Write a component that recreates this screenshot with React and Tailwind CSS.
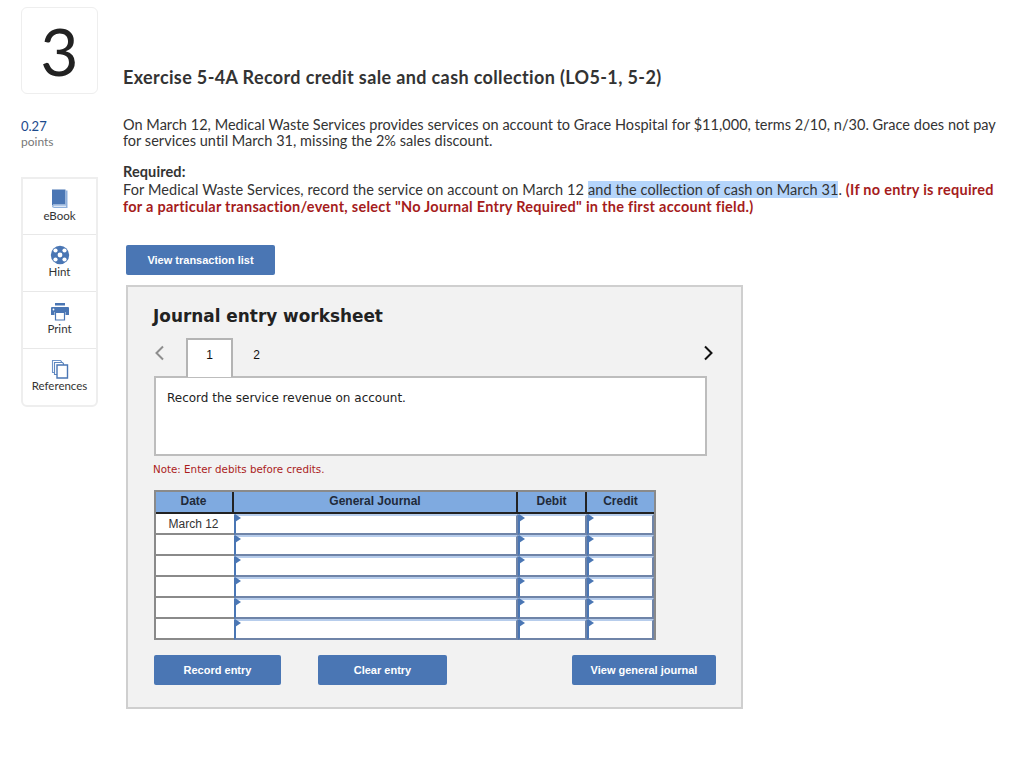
const ROWS = ['March 12', '', '', '', '', ''];

function BookIcon() {
    return (
        <svg width="20" height="20" viewBox="0 0 20 20">
            <path d="M2 0.5h13.5v15H4.500C3 15.500 2 16 2 17z" fill="#4a76b4" />
            <path d="M2 17c0-1 1-1.500 2.500-1.500h11V1.500h2V19H4.500C3 19 2 18.300 2 17z" fill="#8fb0dc" />
            <path d="M3.500 17.200h12.500" stroke="#fff" strokeWidth="1" />
        </svg>
    );
}

function HintIcon() {
    return (
        <svg width="20" height="20" viewBox="0 0 20 20">
            <circle cx="10" cy="10" r="9.200" fill="#4a76b4" />
            <circle cx="10" cy="10" r="2.400" fill="#fff" />
            <circle cx="5.500" cy="5.500" r="2.100" fill="#fff" />
            <circle cx="14.500" cy="5.500" r="2.100" fill="#fff" />
            <circle cx="5.500" cy="14.500" r="2.100" fill="#fff" />
            <circle cx="14.500" cy="14.500" r="2.100" fill="#fff" />
        </svg>
    );
}

function PrintIcon() {
    return (
        <svg width="20" height="20" viewBox="0 0 20 20">
            <path d="M5 1h10v2.500H5z" fill="#4a76b4" />
            <path d="M2 5h16a1 1 0 0 1 1 1v7h-3.500v-3h-11v3H1V6a1 1 0 0 1 1-1z" fill="#4a76b4" />
            <circle cx="3.500" cy="7.500" r="0.900" fill="#fff" />
            <path d="M5.500 10.500h9v7.500h-9z" fill="#fff" stroke="#4a76b4" strokeWidth="1.200" />
        </svg>
    );
}

function RefIcon() {
    return (
        <svg width="20" height="20" viewBox="0 0 20 20">
            <path d="M2.500 1.500h8l1 1v11h-9z" fill="#fff" stroke="#6f94c8" strokeWidth="1.100" />
            <path d="M4.500 3.500h8l1 1v11h-9z" fill="#fff" stroke="#5f88c0" strokeWidth="1.100" />
            <path d="M7 6h10.500v13H7z" fill="#fff" stroke="#4a76b4" strokeWidth="1.400" />
        </svg>
    );
}

function Tool({ icon, label, className }) {
    return (
        <div className={`flex flex-col items-center pt-[10px] ${className}`}>
            {icon}
            <span className="text-[11.500px] leading-[13px] text-[#333]">{label}</span>
        </div>
    );
}

function Sidebar() {
    return (
        <div className="w-[77px] shrink-0">
            <div className="h-[87px] border border-[#eeeeee] rounded-md flex items-start justify-center">
                <span className="mt-[10px] text-[66px] leading-[66px] text-[#222]">3</span>
            </div>
            <div className="mt-[24px] text-[13px] leading-4 text-[#1c4a8c]">0.27</div>
            <div className="text-[12px] leading-4 text-[#777]">points</div>
            <div className="mt-[27px] border-2 border-[#eeeeee] rounded-b-md">
                <Tool icon={<BookIcon />} label="eBook" className="h-[56px] border-b border-[#e8e8e8]" />
                <Tool icon={<HintIcon />} label="Hint" className="h-[57px] border-b border-[#e8e8e8]" />
                <Tool icon={<PrintIcon />} label="Print" className="h-[57px] border-b border-[#e8e8e8]" />
                <Tool icon={<RefIcon />} label="References" className="h-[56px]" />
            </div>
        </div>
    );
}

function Btn({ children, className }) {
    return (
        <button className={`h-[30px] bg-[#4a76b4] rounded-[2px] text-white text-[11px] font-bold font-['Liberation_Sans',sans-serif] ${className}`}>
            {children}
        </button>
    );
}

function EntryCell({ className }) {
    return (
        <div className={`relative bg-white border-l-2 border-r-2 border-l-[#4a76b4] border-r-[#6f84a8] border-t-2 border-t-[#b7cdec] border-b-2 border-b-[#6f84a8] ${className}`}>
            <span className="absolute -left-[1px] -top-[2px] w-0 h-0 border-y-[4px] border-y-transparent border-l-[6px] border-l-[#4a76b4]" />
        </div>
    );
}

function JournalTable() {
    return (
        <div className="w-[502px] mt-[14px] border-2 border-b-0 border-[#8a8a8a] font-['Liberation_Sans',sans-serif] text-[12px]">
            <div className="flex h-[22px] bg-[#7faae0] border-b-2 border-[#222] font-bold text-[#1f2a3a] leading-[19px] text-center">
                <div className="w-[78px] pr-[1px] border-r-2 border-[#222]">Date</div>
                <div className="w-[284px] border-r-2 border-[#222]">General Journal</div>
                <div className="w-[69px] border-r-2 border-[#222]">Debit</div>
                <div className="flex-1">Credit</div>
            </div>
            {ROWS.map((date, i) => (
                <div key={i} className="flex h-[21px]">
                    <div className="w-[78px] pr-[3px] text-center text-[#333] leading-[20px] bg-white border-b-2 border-[#8a8a8a]">
                        {date}
                    </div>
                    <EntryCell className="w-[284px]" />
                    <EntryCell className="w-[69px]" />
                    <EntryCell className="flex-1" />
                </div>
            ))}
        </div>
    );
}

function Worksheet() {
    return (
        <div className="w-[617px] h-[424px] mt-[10px] ml-[3px] bg-[#f2f2f2] border-2 border-[#cfcfcf] pl-[26px] pt-[17px] font-['DejaVu_Sans',sans-serif]">
            <h2 className="text-[16.900px] leading-[24px] font-bold text-[#222] -ml-[1px]">Journal entry worksheet</h2>
            <div className="flex items-center h-[39px] mt-[10px] relative z-10">
                <span className="w-[32px] -mt-[10px]">
                    <svg width="12" height="16" viewBox="0 0 12 16" fill="none" stroke="#8e8e8e" strokeWidth="2">
                        <path d="M9 1.500L2.500 8 9 14.500" />
                    </svg>
                </span>
                <div className="w-[47px] h-[39px] bg-white border-2 border-b-0 border-[#b4b4b4] text-center text-[12px] leading-[31px] text-[#111] font-['Liberation_Sans',sans-serif]">1</div>
                <div className="w-[47px] text-center text-[12px] text-[#111] font-['Liberation_Sans',sans-serif] -mt-[5px]">2</div>
                <span className="ml-[422px] -mt-[10px]">
                    <svg width="12" height="16" viewBox="0 0 12 16" fill="none" stroke="#111" strokeWidth="2">
                        <path d="M3 1.500L9.500 8 3 14.500" />
                    </svg>
                </span>
            </div>
            <div className="w-[553px] h-[80px] -mt-[1px] bg-white border-2 border-[#bdbdbd] px-[11px] pt-[12px] text-[12px] leading-[16px] text-[#222]">
                Record the service revenue on account.
            </div>
            <p className="mt-[7px] -ml-[1px] text-[10.300px] leading-[13px] text-[#ab1c1c]">Note: Enter debits before credits.</p>
            <JournalTable />
            <div className="flex w-[562px] mt-[15px]">
                <Btn className="w-[127px]">Record entry</Btn>
                <Btn className="w-[129px] ml-[37px]">Clear entry</Btn>
                <Btn className="w-[144px] ml-[125px]">View general journal</Btn>
            </div>
        </div>
    );
}

export default function App() {
    return (
        <div className="w-[1024px] h-[757px] bg-white flex pl-[21px] pt-[7px] overflow-hidden font-['Lato',sans-serif]">
            <Sidebar />
            <div className="ml-[25px] w-[885px]">
                <h1 className="mt-[59px] text-[18px] leading-[22px] font-bold tracking-[0.37px] text-[#333]">
                    Exercise 5-4A Record credit sale and cash collection (LO5-1, 5-2)
                </h1>
                <p className="mt-[29px] text-[14.500px] leading-[16px] tracking-[0.03px] text-[#333]">
                    On March 12, Medical Waste Services provides services on account to Grace Hospital for $11,000, terms 2/10, n/30. Grace does not pay
                    <br />
                    for services until March 31, missing the 2% sales discount.
                </p>
                <p className="mt-[14px] text-[14.500px] leading-[17px] text-[#333] font-bold tracking-[0.1px]">Required:</p>
                <p className="mt-[1px] text-[14.500px] leading-[17px] tracking-[0.1px] text-[#333]">
                    For Medical Waste Services, record the service on account on March 12{' '}
                    <span className="bg-[#b5d5fb]">and the collection of cash on March 31</span>.{' '}
                    <b className="text-[#a51c1c] tracking-[0.26px]">
                        (If no entry is required
                        <br />
                        for a particular transaction/event, select "No Journal Entry Required" in the first account field.)
                    </b>
                </p>
                <Btn className="w-[149px] mt-[30px] ml-[3px] block">View transaction list</Btn>
                <Worksheet />
            </div>
        </div>
    );
}
